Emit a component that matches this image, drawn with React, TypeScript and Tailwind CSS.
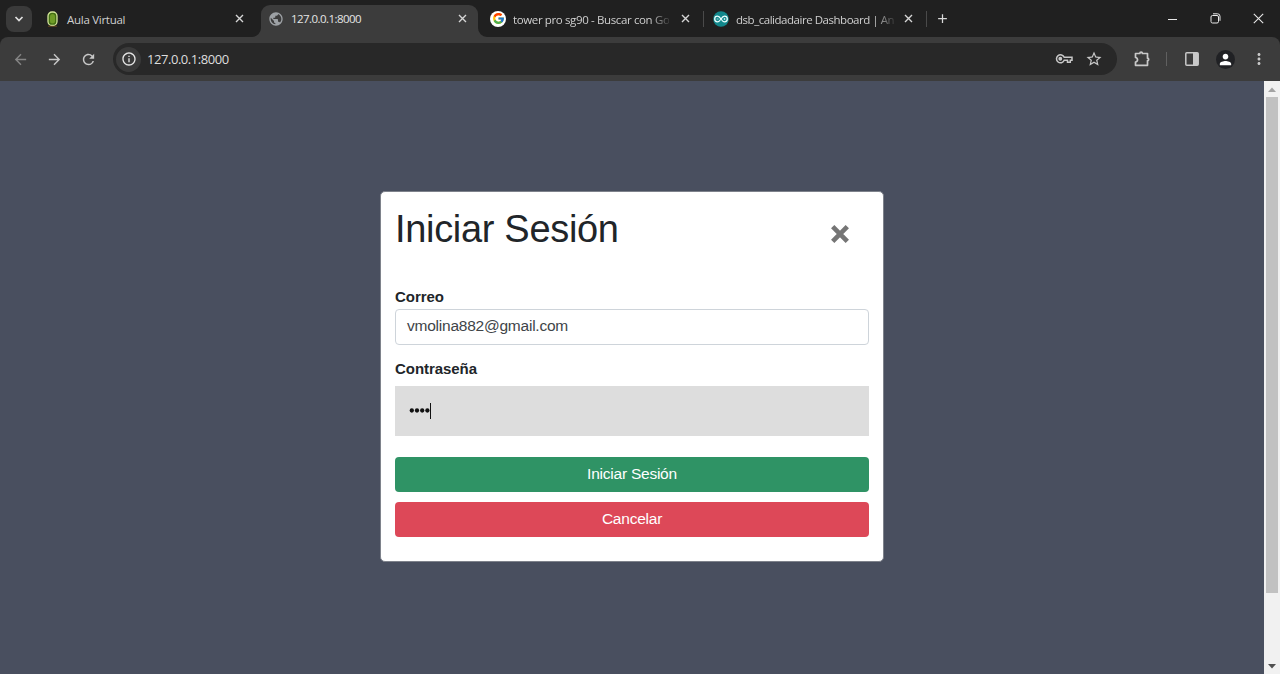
import React from "react";
import {
  MdArrowBack, MdArrowForward, MdRefresh, MdInfoOutline, MdStarBorder,
  MdMoreVert, MdPerson, MdPublic, MdAdd,
} from "react-icons/md";
import { FcGoogle } from "react-icons/fc";

function CloseTab() {
  return (
    <svg className="h-[9px] w-[9px] shrink-0" viewBox="0 0 9 9" stroke="#d6d6d6" strokeWidth="1.4">
      <path d="M1 1l7 7M8 1l-7 7" />
    </svg>
  );
}

function Divider() {
  return <div className="h-4 w-px shrink-0 bg-[#4a4a4a]" />;
}

function TabStrip() {
  return (
    <div className="flex h-[37px] shrink-0 items-center bg-[#202020] text-[11.5px] text-[#cfcfcf]">
      <button className="ml-[6px] flex h-[26px] w-[26px] shrink-0 items-center justify-center rounded-[8px] bg-[#3a3a3a]">
        <svg className="h-[8px] w-[10px]" viewBox="0 0 10 8" fill="none" stroke="#e0e0e0" strokeWidth="1.7">
          <path d="M1.5 2l3.5 3.5L8.500 2" />
        </svg>
      </button>
      <div className="flex h-full w-[229px] shrink-0 items-center pl-[14px] pr-[17px]">
        <svg className="h-4 w-[13px] shrink-0" viewBox="0 0 13 16">
          <rect x="2" y="1" width="9" height="13.500" rx="4" fill="#426e12" stroke="#d3e69a" strokeWidth="1.300" />
          <rect x="4" y="3" width="5" height="9.500" rx="2.500" fill="#6f9c27" />
          <path d="M2 15.300h9" stroke="#5e421d" />
        </svg>
        <span className="ml-[8px] mt-[2px] flex-1 whitespace-nowrap tracking-[-0.28px]">Aula Virtual</span>
        <CloseTab />
      </div>
      <div className="relative flex h-[32px] w-[217px] shrink-0 items-center self-end rounded-t-[9px] bg-[#3c3c3c] pb-[5px] pl-[7px] pr-[11px] text-[#e5e5e5]">
        <svg className="absolute bottom-0 left-[-9px] h-[9px] w-[9px]" viewBox="0 0 9 9"><path d="M9 0v9H0a9 9 0 0 0 9-9" fill="#3c3c3c" /></svg>
        <svg className="absolute bottom-0 right-[-9px] h-[9px] w-[9px]" viewBox="0 0 9 9"><path d="M0 0v9h9a9 9 0 0 1-9-9" fill="#3c3c3c" /></svg>
        <MdPublic className="h-[16px] w-[16px] shrink-0 text-[#9da1a5]" />
        <span className="ml-[7px] mt-px flex-1 whitespace-nowrap tracking-[-0.55px]">127.0.0.1:8000</span>
        <CloseTab />
      </div>
      <div className="flex h-full w-[225px] shrink-0 items-center pl-[12px] pr-[13px]">
        <div className="flex h-[16px] w-[16px] shrink-0 items-center justify-center rounded-full bg-white">
          <FcGoogle className="h-[13px] w-[13px]" />
        </div>
        <div className="ml-[7px] mt-[2px] whitespace-nowrap tracking-[-0.37px] [mask-image:linear-gradient(to_right,black_88%,rgba(0,0,0,0.15))]">
          tower pro sg90 - Buscar con Go
        </div>
        <div className="ml-auto"><CloseTab /></div>
      </div>
      <Divider />
      <div className="flex h-full w-[222px] shrink-0 items-center pl-[9px] pr-[13px]">
        <svg className="h-4 w-4 shrink-0" viewBox="0 0 16 16" fill="none">
          <circle cx="8" cy="8" r="7.800" fill="#12888c" />
          <path d="M8 8C6.500 5.700 5.500 5.200 4.500 5.200a2.800 2.800 0 0 0 0 5.600C5.500 10.800 6.500 10.300 8 8s2.500-2.800 3.500-2.800a2.800 2.800 0 0 1 0 5.600C10.500 10.800 9.500 10.300 8 8z" stroke="#e9ffff" strokeWidth="1.300" />
          <path d="M3.700 8h1.800M10.600 8h1.800M11.500 7.100v1.800" stroke="#e9ffff" strokeWidth=".7" />
        </svg>
        <div className="ml-[7px] mt-[2px] whitespace-nowrap tracking-[-0.47px] [mask-image:linear-gradient(to_right,black_87%,rgba(0,0,0,0.15))]">
          dsb_calidadaire Dashboard | An
        </div>
        <div className="ml-auto"><CloseTab /></div>
      </div>
      <Divider />
      <MdAdd className="ml-[8px] h-[15px] w-[15px] text-[#d9d9d9]" />
      <div className="ml-auto mr-[16px] flex items-center text-[#e8e8e8]">
        <svg className="h-[11px] w-[11px]" viewBox="0 0 11 11" stroke="currentColor"><path d="M1 6.500h9" /></svg>
        <svg className="ml-[32px] h-[11px] w-[11px]" viewBox="0 0 11 11" fill="none" stroke="currentColor">
          <rect x="1" y="2.500" width="7.500" height="7.500" rx="1.500" />
          <path d="M3 .8h4.500a2.500 2.500 0 0 1 2.500 2.500v4.500" />
        </svg>
        <svg className="ml-[32px] h-[11px] w-[11px]" viewBox="0 0 11 11" stroke="currentColor" strokeWidth="1.100"><path d="M.8.8l9.400 9.400M10.200.8L.8 10.200" /></svg>
      </div>
    </div>
  );
}

function Toolbar() {
  return (
    <div className="h-[44px] shrink-0 bg-[#202020]">
      <div className="flex h-full items-center rounded-t-[8px] bg-[#3c3c3c] text-[#c8c8c8]">
        <MdArrowBack className="ml-[12px] h-[17px] w-[17px] text-[#858585]" />
        <MdArrowForward className="ml-[17px] h-[17px] w-[17px]" />
        <MdRefresh className="ml-[17px] h-[17px] w-[17px]" />
        <div className="ml-[16px] flex h-[32px] w-[1004px] items-center rounded-full bg-[#282828] pl-[3px] pr-[14px]">
          <div className="flex h-[25px] w-[25px] items-center justify-center rounded-full bg-[#3a3a3a]">
            <MdInfoOutline className="h-[16px] w-[16px] text-[#e5e5e5]" />
          </div>
          <span className="ml-[6px] mt-px text-[13px] tracking-[-0.45px] text-[#dedede]">127.0.0.1:8000</span>
          <svg className="ml-auto h-[12px] w-[18px]" viewBox="0 0 18 12" fill="none" stroke="currentColor" strokeWidth="1.500">
            <path d="M9.200 4.300H17v3h-1.700v2h-2.800v-2H9.200a4 4 0 1 1 0-3z" />
            <circle cx="5.300" cy="5.800" r="1.200" fill="currentColor" />
          </svg>
          <MdStarBorder className="ml-[12px] h-[18px] w-[18px]" />
        </div>
        <svg className="ml-[16px] h-[18px] w-[18px] shrink-0" viewBox="0 0 18 18" fill="none" stroke="currentColor" strokeWidth="1.700" strokeLinejoin="round">
          <path d="M2.500 3.500h4.300a1.300 1.300 0 0 1 2.600 0H14.500v4.700a1.200 1.200 0 0 1 0 2.400v4.700h-12V12c2.700-.4 2.700-4.100 0-4.500z" />
        </svg>
        <div className="ml-[15px] h-[14px] w-px bg-[#606060]" />
        <svg className="ml-[18px] h-[14px] w-[14px]" viewBox="0 0 14 14" fill="none">
          <rect x=".8" y=".8" width="12.400" height="12.400" rx="1" stroke="currentColor" strokeWidth="1.500" />
          <path d="M8 1h5v12H8z" fill="currentColor" />
        </svg>
        <div className="ml-[17px] flex h-[19px] w-[19px] items-center justify-center rounded-full bg-[#202124]">
          <MdPerson className="h-[17px] w-[17px] text-white" />
        </div>
        <MdMoreVert className="ml-[15px] h-[18px] w-[18px]" />
      </div>
    </div>
  );
}

function LoginDialog() {
  return (
    <form onSubmit={(e) => e.preventDefault()} className="mt-[110px] flex h-[371px] w-[504px] flex-col rounded-[5px] border border-[#7e828b] bg-white px-[14px] text-[15.5px] tracking-[-0.23px] text-[#212529]">
      <div className="flex h-[88px] items-start justify-between pr-[20px]">
        <h1 className="mt-[14px] text-[38px] leading-[46px] tracking-[-0.32px]">Iniciar Sesión</h1>
        <svg className="mt-[32.500px] h-[18px] w-[18px]" viewBox="0 0 18 18" stroke="#757575" strokeWidth="4.700">
          <path d="M1.700 1.700l14.600 14.600M16.300 1.700L1.700 16.300" />
        </svg>
      </div>
      <label className="mt-[5px] h-[24px] text-[15px] font-bold leading-[23px] tracking-[-0.05px]">Correo</label>
      <div className="flex h-[36px] items-center rounded-[4px] border border-[#ced4da] px-[11px] pb-[3px] text-[#404448]">vmolina882@gmail.com</div>
      <label className="mt-[12px] h-[24px] text-[15px] font-bold leading-[23px] tracking-[-0.05px]">Contraseña</label>
      <div className="mt-[5px] flex h-[50px] items-center bg-[#dddddd] pl-[14px]">
        <svg className="h-[16px] w-[22px]" viewBox="0 0 22 16" fill="#111">
          {[2.800, 8, 13.200, 18.400].map((x) => <circle key={x} cx={x} cy="7.500" r="2.150" />)}
          <path d="M21 0h1v16h-1z" />
        </svg>
      </div>
      <button className="mt-[21px] h-[35px] rounded-[4px] bg-[#2f9365] pb-[2px] text-white">Iniciar Sesión</button>
      <button className="mt-[10px] h-[35px] rounded-[4px] bg-[#dd4858] pb-[2px] text-white">Cancelar</button>
    </form>
  );
}

export default function App() {
  return (
    <div className="flex h-[674px] w-[1280px] flex-col overflow-hidden font-['Open_Sans',sans-serif]">
      <TabStrip />
      <Toolbar />
      <div className="flex flex-1 bg-[#494f5f]">
        <main className="flex flex-1 items-start justify-center font-['Liberation_Sans',sans-serif]">
          <LoginDialog />
        </main>
        <div className="flex w-[16px] flex-col items-center bg-[#f1f1f1]">
          <svg className="h-[16px] w-[16px]" viewBox="0 0 16 16"><path d="M4 11l4-4.500 4 4.500z" fill="#a3a3a3" /></svg>
          <div className="h-[496px] w-[12px] bg-[#c1c1c1]" />
          <svg className="mt-auto h-[16px] w-[16px]" viewBox="0 0 16 16"><path d="M4 6l4 4.500L12 6z" fill="#505050" /></svg>
        </div>
      </div>
    </div>
  );
}
